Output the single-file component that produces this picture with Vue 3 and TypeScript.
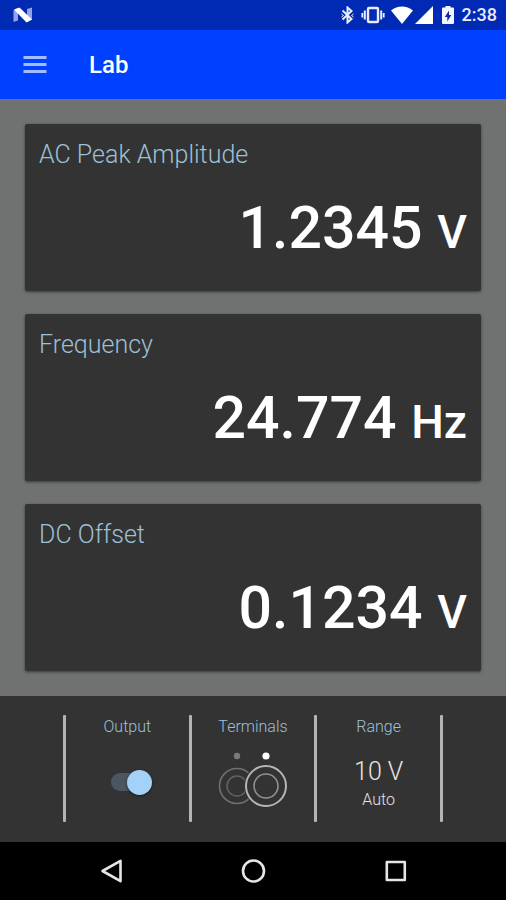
<script setup lang="ts">
import { ref } from 'vue'

interface Reading {
  label: string
  value: string
  unit: string
}

const readings: Reading[] = [
  { label: 'AC Peak Amplitude', value: '1.2345', unit: 'V' },
  { label: 'Frequency', value: '24.774', unit: 'Hz' },
  { label: 'DC Offset', value: '0.1234', unit: 'V' },
]

const outputOn = ref(true)
</script>

<template>
  <div class="screen">
    <div class="status-bar">
      <svg class="n-logo" width="20" height="16" viewBox="0 0 20 16" aria-hidden="true">
        <path d="M0.500 3.500L5 1V13.500L0.500 15Z" fill="#8fa5e6" />
        <path d="M14 2L19 0.500V12.500L14 15Z" fill="#8fa5e6" />
        <path d="M1 2.500L6.500 0.500L19 12.500L13.500 15.500Z" fill="#fff" />
      </svg>
      <div class="status-icons">
        <svg width="13" height="18" viewBox="0 0 13 18" fill="none" stroke="#e8ecfb" stroke-width="2" aria-hidden="true">
          <path d="M1.500 4.500L10.500 13L6.500 16.500V1.500L10.500 5L1.500 13.500" />
          <path d="M0.500 8L2.500 9.500L0.500 11M12.500 8L10.500 9.500L12.500 11" stroke-width="1" />
        </svg>
        <svg class="vibrate" width="24" height="18" viewBox="0 0 24 18" fill="none" stroke="#e8ecfb" aria-hidden="true">
          <rect x="7" y="2" width="10" height="14" rx="1" stroke-width="2.400" />
          <path d="M3.800 4.500V13.500M20.200 4.500V13.500" stroke-width="2" />
          <path d="M1.300 7V11.500M22.700 7V11.500" stroke-width="1.800" />
        </svg>
        <svg class="wifi" width="22" height="18" viewBox="0 0 22 18" fill="#fff" aria-hidden="true">
          <path d="M11 18L0 4.500C6.500 -1 15.500 -1 22 4.500Z" />
        </svg>
        <svg class="signal" width="18" height="18" viewBox="0 0 18 18" fill="#fff" aria-hidden="true">
          <path d="M0 18L18 0V18Z" />
        </svg>
        <svg class="battery" width="12" height="18" viewBox="0 0 12 18" aria-hidden="true">
          <path d="M3.500 0H8.500V1.500H11Q12 1.500 12 2.500V17Q12 18 11 18H1Q0 18 0 17V2.500Q0 1.500 1 1.500H3.500Z" fill="#f4f6ff" />
          <path d="M7 4.500L2.800 11H5.300V15.500L9.300 9H7Z" fill="#0a2ba8" />
        </svg>
        <span class="clock">2:38</span>
      </div>
    </div>

    <header class="app-bar">
      <button class="menu" type="button" aria-label="Menu">
        <svg width="24" height="18" viewBox="0 0 24 18" fill="#a3bbff" aria-hidden="true">
          <rect x="0.500" y="0" width="23" height="3" />
          <rect x="0.500" y="7" width="23" height="3" />
          <rect x="0.500" y="14" width="23" height="3" />
        </svg>
      </button>
      <h1>Lab</h1>
    </header>

    <main class="readings">
      <section v-for="r in readings" :key="r.label" class="card">
        <h2>{{ r.label }}</h2>
        <p class="value">{{ r.value }} <span class="unit">{{ r.unit }}</span></p>
      </section>
    </main>

    <div class="controls">
      <div class="divider"></div>
      <div class="control">
        <label class="caption" for="output">Output</label>
        <div class="control-body">
          <input id="output" v-model="outputOn" class="switch" type="checkbox" role="switch" />
        </div>
      </div>
      <div class="divider"></div>
      <div class="control">
        <span class="caption">Terminals</span>
        <div class="control-body">
          <svg width="72" height="56" viewBox="0 0 72 56" fill="none" aria-hidden="true">
            <circle cx="20" cy="34" r="17.500" stroke="#707070" stroke-width="1.600" />
            <circle cx="20" cy="34" r="10" stroke="#5f6263" stroke-width="1.500" />
            <circle cx="49" cy="34" r="22" fill="#333" />
            <circle cx="49" cy="34" r="20" stroke="#b5b5b5" stroke-width="2" />
            <circle cx="49" cy="34" r="12" stroke="#929292" stroke-width="1.600" />
            <circle cx="20" cy="4" r="3.200" fill="#7a7a7a" />
            <circle cx="49" cy="4" r="3.600" fill="#fff" />
          </svg>
        </div>
      </div>
      <div class="divider"></div>
      <div class="control">
        <span class="caption">Range</span>
        <div class="control-body range">
          <span class="range-value">10 V</span>
          <span class="range-mode">Auto</span>
        </div>
      </div>
      <div class="divider"></div>
    </div>

    <nav class="nav-bar">
      <button type="button" aria-label="Back">
        <svg width="26" height="26" viewBox="0 0 26 26" fill="none" stroke="#e6e6e6" stroke-width="2.600" stroke-linejoin="round" aria-hidden="true">
          <path d="M4.500 13L22.500 2.800V23.200Z" />
        </svg>
      </button>
      <button type="button" aria-label="Home">
        <svg width="26" height="26" viewBox="0 0 26 26" fill="none" stroke="#e6e6e6" stroke-width="2.600" aria-hidden="true">
          <circle cx="13.500" cy="13" r="10.500" />
        </svg>
      </button>
      <button type="button" aria-label="Recent apps">
        <svg width="26" height="26" viewBox="0 0 26 26" fill="none" stroke="#e6e6e6" stroke-width="2.600" stroke-linejoin="round" aria-hidden="true">
          <rect x="4.800" y="4" width="18" height="18" />
        </svg>
      </button>
    </nav>
  </div>
</template>

<style>
body {
  margin: 0;
}
</style>

<style scoped>
.screen {
  display: flex;
  flex-direction: column;
  min-height: 100vh;
  background: #6f7270;
  color: #fff;
  font-family: Roboto, "Liberation Sans", sans-serif;
}

h1,
h2,
p {
  margin: 0;
}

svg {
  display: block;
}

button {
  display: flex;
  align-items: center;
  justify-content: center;
  padding: 0;
  border: 0;
  background: none;
  cursor: pointer;
}

.status-bar {
  display: flex;
  align-items: center;
  justify-content: space-between;
  height: 30px;
  padding: 0 9px 0 13px;
  background: #002ab3;
}

.status-icons {
  display: flex;
  align-items: center;
}

.vibrate {
  margin-left: 7px;
}

.wifi {
  margin-left: 6px;
}

.signal {
  margin-left: 2px;
}

.battery {
  margin-left: 9px;
}

.clock {
  margin-left: 8px;
  font-size: 18px;
  font-weight: 500;
  line-height: 20px;
  color: #e8ecfb;
}

.app-bar {
  display: flex;
  align-items: center;
  gap: 42px;
  height: 69px;
  padding: 0 23px;
  background: #0040ff;
}

h1 {
  font-size: 24px;
  font-weight: 500;
  line-height: 32px;
}

.readings {
  display: flex;
  flex: 1;
  flex-direction: column;
  gap: 23px;
  padding: 25px;
}

.card {
  padding: 15px 14px 27px;
  border-radius: 2px;
  background: #333;
  box-shadow: 0 1px 3px rgba(0, 0, 0, 0.5);
}

h2 {
  font-size: 25px;
  font-weight: 300;
  line-height: 32px;
  color: #9cc0d6;
}

.value {
  margin-top: 21px;
  font-size: 59px;
  font-weight: 500;
  line-height: 72px;
  text-align: right;
}

.unit {
  font-size: 46px;
  line-height: 48px;
}

.controls {
  display: flex;
  padding: 19px 63px 20px;
  background: #333;
}

.divider {
  width: 3px;
  border-radius: 1px;
  background: #b4b4b4;
}

.control {
  display: flex;
  flex: 1;
  flex-direction: column;
  align-items: center;
  height: 107px;
}

.caption {
  font-size: 16px;
  font-weight: 300;
  line-height: 24px;
  color: #9cc0d6;
}

.control-body {
  display: flex;
  flex: 1;
  flex-direction: column;
  align-items: center;
  padding-top: 13px;
}

.switch {
  display: flex;
  align-items: center;
  width: 50px;
  height: 26px;
  margin: 17px 0 0;
  padding-left: 9px;
  box-sizing: border-box;
  appearance: none;
  cursor: pointer;
}

.switch::before {
  content: "";
  width: 34px;
  height: 18px;
  border-radius: 9px;
  background: #4a5661;
}

.switch::after {
  content: "";
  flex: none;
  width: 25px;
  height: 25px;
  margin-left: -34px;
  border-radius: 50%;
  background: #a3d1f8;
  box-shadow: 0 1px 3px rgba(0, 0, 0, 0.5);
}

.switch:checked::after {
  margin-left: -18px;
}

.range {
  color: #e4e4e4;
}

.range-value {
  font-size: 25px;
  font-weight: 300;
  line-height: 40px;
}

.range-mode {
  font-size: 16px;
  font-weight: 300;
  line-height: 16px;
}

.nav-bar {
  display: flex;
  height: 58px;
  padding: 0 40px;
  background: #000;
}

.nav-bar button {
  flex: 1;
}
</style>
